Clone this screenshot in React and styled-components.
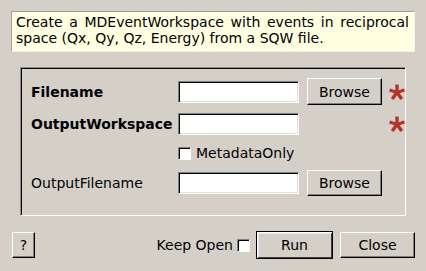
import React from 'react';
import styled, { createGlobalStyle } from 'styled-components';

const GlobalStyle = createGlobalStyle`
  html, body {
    margin: 0;
    padding: 0;
    background: #d4d0c8;
  }
  body {
    font-family: "DejaVu Sans", "Liberation Sans", sans-serif;
    font-size: 14px;
    color: #000;
  }
`;

const Dialog = styled.div`
  width: 426px;
  height: 271px;
  box-sizing: border-box;
  padding: 11px 11px 0 11px;
  background: #d4d0c8;
  overflow: hidden;
`;

const Description = styled.div`
  box-sizing: border-box;
  height: 41px;
  padding: 2px 5px 0 4px;
  background: #ffffe1;
  border: 1px solid;
  border-color: #a0a0a0 #f4f4f4 #f4f4f4 #a0a0a0;
  line-height: 16px;
  text-align: justify;
`;

const Frame = styled.div`
  box-sizing: border-box;
  width: 386px;
  height: 149px;
  margin: 15px 0 0 9px;
  padding: 10px 0 0 10px;
  border: 1px solid;
  border-color: #909090 #fff #fff #909090;
  box-shadow: inset 1px 1px 0 #000;
  display: flex;
  flex-direction: column;
`;

const Row = styled.div`
  display: grid;
  grid-template-columns: 147px 129px 82px 1fr;
  align-items: center;
  height: ${p => p.$h}px;
  margin-top: ${p => p.$mt || 0}px;
`;

const Label = styled.span`
  font-weight: ${p => (p.$bold ? 700 : 400)};
  white-space: nowrap;
`;

const TextInput = styled.div`
  box-sizing: border-box;
  width: 121px;
  height: 22px;
  background: #fff;
  border: 1px solid;
  border-color: #808080 #fff #fff #808080;
  box-shadow: inset 1px 1px 0 #000, inset -1px -1px 0 #e4e0d8;
`;

const Button = styled.button`
  box-sizing: border-box;
  width: ${p => p.$w}px;
  height: ${p => p.$h || 26}px;
  padding: 0;
  margin: 0 0 0 ${p => p.$ml || 0}px;
  font-family: inherit;
  font-size: 14px;
  color: #000;
  background: #d4d0c8;
  border: 1px solid;
  border-color: ${p => (p.$default ? '#000' : '#fff #000 #000 #fff')};
  box-shadow: ${p =>
    p.$default
      ? 'inset 1px 1px 0 #fff, inset -1px -1px 0 #404040, inset 2px 2px 0 #e8e6e0'
      : 'inset -1px -1px 0 #808080'};
`;

const CheckBox = styled.span`
  display: inline-block;
  box-sizing: border-box;
  width: 13px;
  height: 13px;
  background: #fff;
  border: 1px solid;
  border-color: #808080 #fff #fff #808080;
  box-shadow: inset 1px 1px 0 #000;
  flex: none;
`;

const CheckLabel = styled.label`
  display: flex;
  align-items: center;
  gap: 5px;
  grid-column: 2 / 4;
  white-space: nowrap;
`;

const Star = styled.svg`
  display: block;
`;

const Footer = styled.div`
  display: flex;
  align-items: center;
  margin-top: 15px;
  padding-left: 1px;
`;

const Spacer = styled.div`
  flex: 1;
`;

const KeepOpen = styled.label`
  display: flex;
  align-items: center;
  gap: 4px;
  margin-right: 6px;
`;

const Required = () => (
  <Star width="16" height="16" viewBox="0 0 16 16">
    <g stroke="#b5322a" strokeWidth="3.4" strokeLinecap="butt">
      <line x1="8" y1="8.5" x2="8" y2="0.5" />
      <line x1="8" y1="8.5" x2="0.6" y2="6" />
      <line x1="8" y1="8.5" x2="15.4" y2="6" />
      <line x1="8" y1="8.5" x2="3.2" y2="15" />
      <line x1="8" y1="8.5" x2="12.8" y2="15" />
    </g>
  </Star>
);

export default function App() {
  return (
    <>
      <GlobalStyle />
      <Dialog>
        <Description>
          Create a MDEventWorkspace with events in reciprocal space (Qx, Qy, Qz, Energy) from a SQW file.
        </Description>
        <Frame>
          <Row $h={27}>
            <Label $bold>Filename</Label>
            <TextInput />
            <Button $w={75} $h={27}>Browse</Button>
            <Required />
          </Row>
          <Row $h={22} $mt={8}>
            <Label $bold>OutputWorkspace</Label>
            <TextInput />
            <span />
            <Required />
          </Row>
          <Row $h={13} $mt={10}>
            <span />
            <CheckLabel>
              <CheckBox />
              MetadataOnly
            </CheckLabel>
          </Row>
          <Row $h={26} $mt={12}>
            <Label>OutputFilename</Label>
            <TextInput />
            <Button $w={75}>Browse</Button>
          </Row>
        </Frame>
        <Footer>
          <Button $w={23}>?</Button>
          <Spacer />
          <KeepOpen>
            Keep Open
            <CheckBox />
          </KeepOpen>
          <Button $w={77} $h={28} $default>Run</Button>
          <Button $w={75} $ml={7}>Close</Button>
        </Footer>
      </Dialog>
    </>
  );
}
